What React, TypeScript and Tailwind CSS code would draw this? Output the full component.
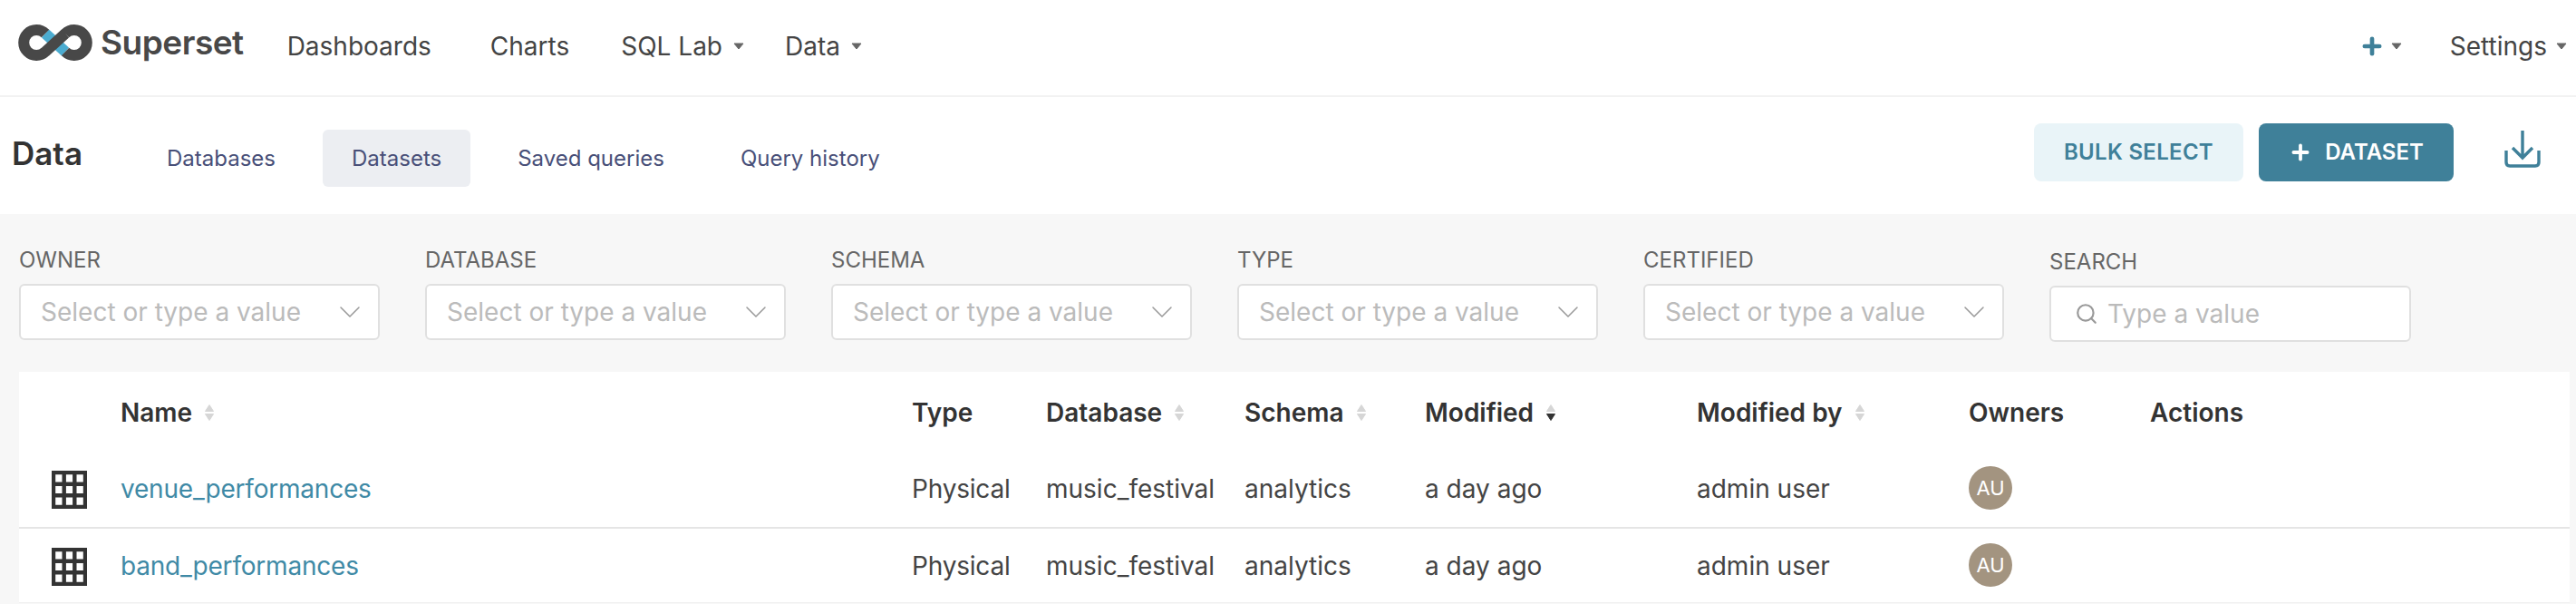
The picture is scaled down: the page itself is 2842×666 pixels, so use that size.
import { Plus, ChevronDown, Search } from "lucide-react";

const filters = ["Owner", "Database", "Schema", "Type", "Certified"];

const columns = "grid-cols-[112px_873px_148px_219px_199px_300px_300px_200px_1fr]";

function Caret({ className = "" }: { className?: string }) {
  return (
    <svg width="12" height="8" viewBox="0 0 12 8" className={className}>
      <path d="M1 1H11L6 7Z" fill="#666666" stroke="#666666" strokeLinejoin="round" />
    </svg>
  );
}

function SortIcon({ active = false }: { active?: boolean }) {
  return (
    <svg width="12" height="22" viewBox="0 0 12 22" className="ml-[13px] shrink-0">
      <path d="M6 2.5L10.5 9.5H1.5Z" fill="#d6d6d6" stroke="#d6d6d6" strokeLinejoin="round" />
      <path d="M1.5 12.5H10.5L6 19.5Z" fill={active ? "#333333" : "#d6d6d6"} stroke={active ? "#333333" : "#d6d6d6"} strokeLinejoin="round" />
    </svg>
  );
}

function Logo() {
  return (
    <svg width="82" height="40" viewBox="0 0 82 40" fill="none">
      <path d="M30 10L52 30" stroke="#4bacd0" strokeWidth="12" />
      <path
        d="M52 10L30 30A14 14 0 1 1 30 10M52 30A14 14 0 1 0 52 10"
        stroke="#484848"
        strokeWidth="12"
      />
    </svg>
  );
}

function TableIcon() {
  return (
    <svg width="39" height="42" viewBox="0 0 39 42" className="ml-[36px] mt-[2px]" fill="none">
      <path
        d="M2 2H37V40H2ZM13.7 2V40M25.3 2V40M2 14.7H37M2 27.3H37"
        stroke="#333333"
        strokeWidth="4.4"
      />
    </svg>
  );
}

function Avatar() {
  return (
    <div className="w-12 h-12 -mt-[2px] rounded-full bg-[#a39480] text-white text-[22px] flex items-center justify-center">
      AU
    </div>
  );
}

function Row({ name, border }: { name: string; border?: boolean }) {
  return (
    <div
      className={`grid ${columns} items-center text-[28px] text-[#444444] ${
        border ? "h-[83px] pb-[3px] border-b-2 border-[#e5e5e5]" : "h-[82px]"
      }`}
    >
      <TableIcon />
      <a className="text-[#3f8aa6] tracking-[-0.2px]">{name}</a>
      <div className="tracking-[-0.2px]">Physical</div>
      <div>music_festival</div>
      <div>analytics</div>
      <div>a day ago</div>
      <div>admin user</div>
      <Avatar />
      <div />
    </div>
  );
}

export default function App() {
  return (
    <div className="w-[2842px] h-[666px] overflow-hidden bg-white font-['Inter',sans-serif]">
      {/* top nav */}
      <div className="h-[107px] border-b-2 border-[#f2f2f2] flex items-center pl-5 pr-[10px] text-[28px] text-[#444444]">
        <div className="-mt-[11px]">
          <Logo />
        </div>
        <span className="ml-[9px] -mt-[11px] text-[37px] font-semibold text-[#484848] tracking-[-0.5px]">
          Superset
        </span>
        <div className="flex items-center -mt-[3px] ml-[48px]">
          <span>Dashboards</span>
          <span className="ml-[65px]">Charts</span>
          <span className="ml-[57px]">SQL Lab</span>
          <Caret className="ml-3" />
          <span className="ml-[45px]">Data</span>
          <Caret className="ml-3" />
        </div>
        <div className="ml-auto flex items-center -mt-[3px]">
          <Plus size={28} strokeWidth={4} className="text-[#3f8099]" />
          <Caret className="ml-[7px]" />
          <span className="ml-[53px]">Settings</span>
          <Caret className="ml-[10px]" />
        </div>
      </div>

      {/* sub header */}
      <div className="h-[129px] flex items-start pl-[13px]">
        <h1 className="mt-[42px] text-[35px] leading-[40px] font-semibold text-[#333333]">Data</h1>
        <div className="ml-[61px] mt-[36px] flex gap-5 text-[24px] text-[#484f78]">
          <div className="h-[63px] px-8 flex items-center rounded-[6px]">Databases</div>
          <div className="h-[63px] px-8 flex items-center rounded-[6px] bg-[#eceef2]">Datasets</div>
          <div className="h-[63px] px-8 flex items-center rounded-[6px]">Saved queries</div>
          <div className="h-[63px] px-8 flex items-center rounded-[6px]">Query history</div>
        </div>
        <div className="ml-auto mt-[29px] flex items-start">
          <button className="w-[231px] h-16 rounded-[8px] bg-[#e9f4f8] text-[#3f8099] text-[24px] font-semibold tracking-[0.3px]">
            BULK SELECT
          </button>
          <button className="ml-[17px] w-[215px] h-16 rounded-[8px] bg-[#3f8099] text-white text-[24px] font-semibold flex items-center justify-center">
            <Plus size={26} strokeWidth={3.5} />
            <span className="ml-[14px]">DATASET</span>
          </button>
          <svg width="42" height="44" viewBox="0 0 42 44" fill="none" className="ml-[55px] mr-[38px] mt-[6px]" stroke="#3f8099" strokeWidth="3.4">
            <path d="M21 2V31M10 21L21 32L32 21" />
            <path d="M3 24V37Q3 41 7 41H35Q39 41 39 37V24" />
          </svg>
        </div>
      </div>

      {/* filters + list */}
      <div className="h-[430px] bg-[#f7f7f7] pl-[21px] pr-[7px] pt-[39px]">
        <div className="flex gap-[50px] h-[135px]">
          {filters.map((f) => (
            <div key={f} className="w-[398px]">
              <div className="text-[24px] leading-[24px] uppercase text-[#666666]">{f}</div>
              <div className="mt-[14px] h-[62px] rounded-[6px] border-2 border-[#e0e0e0] bg-white flex items-center pl-[22px] pr-[11px] text-[28px] text-[#bbbbbb]">
                <span>Select or type a value</span>
                <ChevronDown size={40} strokeWidth={0.9} className="ml-auto text-[#999999]" />
              </div>
            </div>
          ))}
          <div className="w-[399px] mt-[2px]">
            <div className="text-[24px] leading-[24px] uppercase text-[#666666]">Search</div>
            <div className="mt-[14px] h-[62px] rounded-[6px] border-2 border-[#e0e0e0] bg-white flex items-center pl-[26px] text-[28px] text-[#bbbbbb]">
              <Search size={26} strokeWidth={2} className="text-[#999999]" />
              <span className="ml-[10px]">Type a value</span>
            </div>
          </div>
        </div>

        <div className="bg-white h-[255px] border-b border-[#f0f0f0]">
          <div className={`grid ${columns} items-center h-[90px] text-[28px] font-semibold text-[#333333]`}>
            <div />
            <div className="flex items-center">Name<SortIcon /></div>
            <div>Type</div>
            <div className="flex items-center">Database<SortIcon /></div>
            <div className="flex items-center">Schema<SortIcon /></div>
            <div className="flex items-center">Modified<SortIcon active /></div>
            <div className="flex items-center">Modified by<SortIcon /></div>
            <div>Owners</div>
            <div>Actions</div>
          </div>
          <Row name="venue_performances" border />
          <Row name="band_performances" />
        </div>
      </div>
    </div>
  );
}
